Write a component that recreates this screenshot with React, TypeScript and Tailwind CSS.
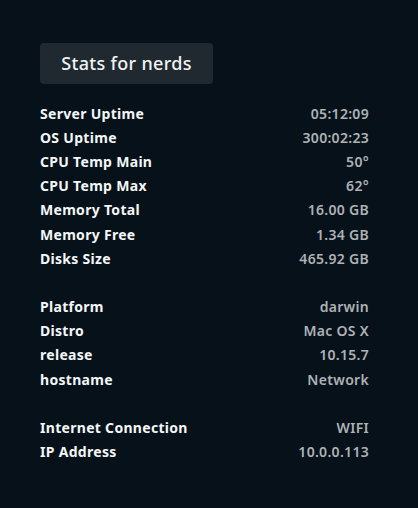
import React from "react";

const groups: [string, string][][] = [
  [
    ["Server Uptime", "05:12:09"],
    ["OS Uptime", "300:02:23"],
    ["CPU Temp Main", "50°"],
    ["CPU Temp Max", "62°"],
    ["Memory Total", "16.00 GB"],
    ["Memory Free", "1.34 GB"],
    ["Disks Size", "465.92 GB"],
  ],
  [
    ["Platform", "darwin"],
    ["Distro", "Mac OS X"],
    ["release", "10.15.7"],
    ["hostname", "Network"],
  ],
  [
    ["Internet Connection", "WIFI"],
    ["IP Address", "10.0.0.113"],
  ],
];

export default function App() {
  return (
    <div
      className="w-[418px] h-[508px] bg-[#06111a] pl-[40px] pt-[43px]"
      style={{ fontFamily: '"Noto Sans", "Open Sans", sans-serif' }}
    >
      <div className="w-[173px] h-[41px] rounded-[4px] bg-[#1f292f] flex items-center justify-center text-[18px] font-medium text-[#f2f4f5] tracking-[0.3px]">
        Stats for nerds
      </div>
      <div className="w-[329px] mt-[17px] flex flex-col gap-[24.2px]">
        {groups.map((g, i) => (
          <div key={i} className="flex flex-col">
            {g.map(([k, v]) => (
              <div
                key={k}
                className="h-[24.2px] flex items-center justify-between text-[14px]"
              >
                <span className="font-bold text-[#f4f6f7] tracking-[0.3px]">{k}</span>
                <span className="font-semibold text-[#aeb2b5] tracking-[0.3px]">{v}</span>
              </div>
            ))}
          </div>
        ))}
      </div>
    </div>
  );
}
